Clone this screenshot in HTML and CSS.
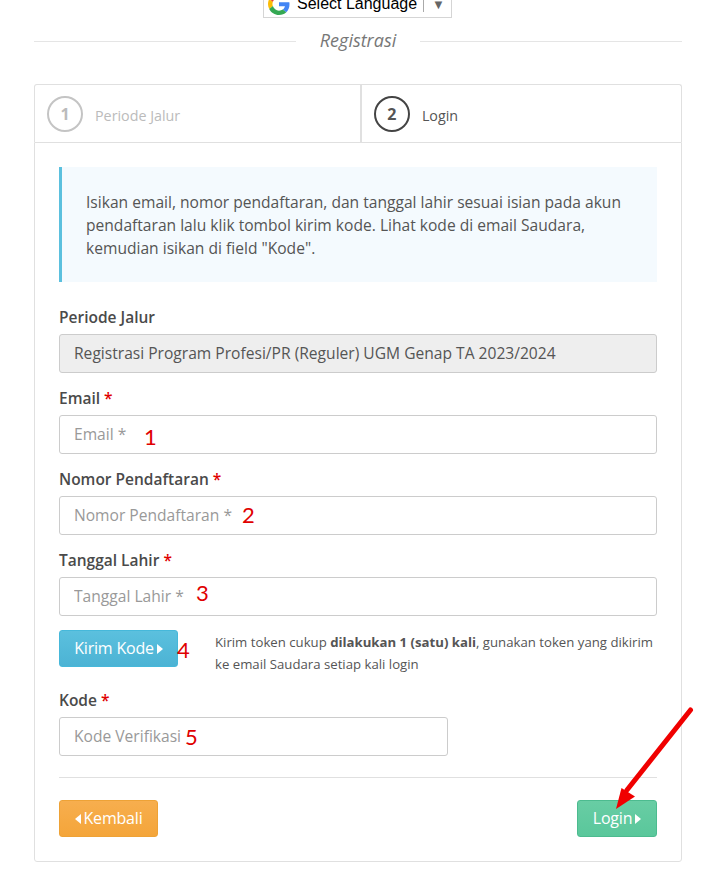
FILE: index.html
```html
<!DOCTYPE html>
<html lang="id">
<head>
    <meta charset="UTF-8">
    <meta name="viewport" content="width=device-width, initial-scale=1.0">
    <title>Registrasi</title>
    <link rel="stylesheet" href="styles.css">
</head>
<body>
    <div class="translate">
        <svg class="g-logo" width="22" height="22" viewBox="0 0 48 48">
            <path fill="#EA4335" d="M24 9.500c3.500 0 6.700 1.200 9.200 3.600l6.900-6.900C35.900 2.400 30.400 0 24 0 14.600 0 6.500 5.400 2.600 13.200l8 6.200C12.500 13.700 17.800 9.500 24 9.500z"/>
            <path fill="#4285F4" d="M46.900 24.500c0-1.600-.1-3.100-.4-4.500H24v9h12.900c-.6 3-2.200 5.500-4.800 7.200l7.700 6c4.500-4.200 7.100-10.300 7.100-17.700z"/>
            <path fill="#FBBC05" d="M10.500 28.600c-.5-1.400-.8-3-.8-4.600s.3-3.200.8-4.600l-8-6.200C.9 16.500 0 20.100 0 24s.9 7.500 2.600 10.800l7.900-6.200z"/>
            <path fill="#34A853" d="M24 48c6.500 0 11.900-2.100 15.900-5.800l-7.700-6c-2.200 1.400-4.900 2.300-8.200 2.300-6.200 0-11.500-4.200-13.400-9.900l-8 6.200C6.500 42.600 14.600 48 24 48z"/>
        </svg>
        <span class="translate-text">Select Language</span>
        <span class="translate-sep"></span>
        <span class="translate-caret">▼</span>
    </div>

    <div class="container">
        <div class="title-row">
            <span class="title-line"></span>
            <span class="title">Registrasi</span>
            <span class="title-line"></span>
        </div>

        <div class="steps">
            <div class="step">
                <span class="step-num">1</span>
                <span class="step-label">Periode Jalur</span>
            </div>
            <div class="step active">
                <span class="step-num">2</span>
                <span class="step-label">Login</span>
            </div>
        </div>

        <form class="panel">
            <div class="info">
                Isikan email, nomor pendaftaran, dan tanggal lahir sesuai isian pada akun
                pendaftaran lalu klik tombol kirim kode. Lihat kode di email Saudara,
                kemudian isikan di field "Kode".
            </div>

            <div class="form-group">
                <label class="form-label">Periode Jalur</label>
                <input class="form-control" type="text" value="Registrasi Program Profesi/PR (Reguler) UGM Genap TA 2023/2024" disabled>
            </div>

            <div class="form-group">
                <label class="form-label">Email <span class="req">*</span></label>
                <div class="field">
                    <input class="form-control" type="text" placeholder="Email *">
                    <span class="mark mark-1">1</span>
                </div>
            </div>

            <div class="form-group">
                <label class="form-label">Nomor Pendaftaran <span class="req">*</span></label>
                <div class="field">
                    <input class="form-control" type="text" placeholder="Nomor Pendaftaran *">
                    <span class="mark mark-2">2</span>
                </div>
            </div>

            <div class="form-group">
                <label class="form-label">Tanggal Lahir <span class="req">*</span></label>
                <div class="field">
                    <input class="form-control" type="text" placeholder="Tanggal Lahir *">
                    <span class="mark mark-3">3</span>
                </div>
            </div>

            <div class="send-row">
                <div class="field">
                    <button type="button" class="button button-info">Kirim Kode<span class="caret-right"></span></button>
                    <span class="mark mark-4">4</span>
                </div>
                <p class="send-note">Kirim token cukup <b>dilakukan 1 (satu) kali</b>, gunakan token yang dikirim ke email Saudara setiap kali login</p>
            </div>

            <div class="form-group code-group">
                <label class="form-label">Kode <span class="req">*</span></label>
                <div class="field">
                    <input class="form-control" type="text" placeholder="Kode Verifikasi">
                    <span class="mark mark-5">5</span>
                </div>
            </div>

            <div class="actions">
                <button type="button" class="button button-warning"><span class="caret-left"></span>Kembali</button>
                <button type="button" class="button button-success">Login<span class="caret-right"></span></button>
            </div>
        </form>
    </div>

    <svg class="arrow" width="90" height="120" viewBox="0 0 90 120">
        <line x1="78.500" y1="5" x2="15" y2="85" stroke="#f00000" stroke-width="5" stroke-linecap="round"/>
        <polygon points="4,104 9.500,83 23,91.500" fill="#f00000"/>
    </svg>
</body>
</html>
```

FILE: styles.css
```css
* {
    box-sizing: border-box;
    margin: 0;
    padding: 0;
}

body {
    position: relative;
    font-family: 'Open Sans', sans-serif;
    font-size: 14px;
    color: #555;
    background-color: #fff;
    min-height: 894px;
    overflow: hidden;
}

.translate {
    display: flex;
    align-items: center;
    width: 189px;
    height: 28px;
    margin: -10px 0 0 263px;
    padding-left: 4px;
    border: 1px solid #d5d5d5;
    font-family: 'Liberation Sans', sans-serif;
    font-size: 16px;
    color: #000;
}

.g-logo {
    margin-right: 7px;
}

.translate-sep {
    width: 1px;
    height: 15px;
    margin: 0 8px 0 6px;
    background-color: #aaa;
}

.translate-caret {
    font-size: 13px;
    color: #666;
}

.container {
    margin: 0 30px 0 34px;
}

.title-row {
    display: flex;
    align-items: center;
    height: 46px;
}

.title-line {
    flex: 1;
    height: 1px;
    background-color: #e5e5e5;
}

.title {
    padding: 0 24px 2px;
    font-size: 18px;
    font-style: italic;
    color: #777;
}

.steps {
    display: flex;
    height: 58px;
    margin-top: 20px;
    border: 1px solid #e0e0e0;
    border-bottom: none;
    border-radius: 3px 3px 0 0;
}

.step {
    display: flex;
    align-items: center;
    flex: 326;
    padding-left: 12px;
    color: #bbb;
}

.step.active {
    flex: 320;
    border-left: 2px solid #e0e0e0;
    color: #555;
}

.step-num {
    display: flex;
    justify-content: center;
    align-items: center;
    width: 36px;
    height: 36px;
    margin-right: 12px;
    border: 2px solid #c4c4c4;
    border-radius: 50%;
    font-size: 16px;
    font-weight: 700;
}

.step.active .step-num {
    border-color: #444;
}

.step-label {
    margin-top: 3px;
    font-size: 14.300px;
}

.panel {
    height: 720px;
    padding: 24px 24px 0;
    border: 1px solid #e0e0e0;
    border-radius: 0 0 3px 3px;
}

.info {
    height: 115px;
    margin-bottom: 24px;
    padding: 24px 24px 0;
    border-left: 3px solid #5bc0de;
    background-color: #f4fafe;
    font-size: 15.600px;
    line-height: 23px;
    color: #555;
}

.form-group {
    margin-bottom: 14px;
}

.form-label {
    display: block;
    height: 23px;
    margin-bottom: 5px;
    font-size: 15.500px;
    font-weight: 600;
    line-height: 23px;
    color: #4a4a4a;
}

.req {
    color: #e00000;
}

.form-control {
    display: block;
    width: 100%;
    height: 39px;
    padding: 0 14px 2px;
    border: 1px solid #ccc;
    border-radius: 3px;
    font-family: 'Open Sans', sans-serif;
    font-size: 15.600px;
    color: #555;
    background-color: #fff;
}

.form-control::placeholder {
    color: #999;
    opacity: 1;
}

.form-control:disabled {
    background-color: #eee;
    color: #555;
}

.field {
    position: relative;
}

.mark {
    position: absolute;
    font-family: 'Lato', sans-serif;
    font-size: 22px;
    line-height: 28px;
    color: #e00000;
}

.mark-1 { left: 85px; top: 8px; }
.mark-2 { left: 183px; top: 5px; }
.mark-3 { left: 137px; top: 2px; }
.mark-4 { left: 118px; top: 6px; }
.mark-5 { left: 126px; top: 6px; }

.send-row {
    display: flex;
    margin-bottom: 14px;
}

.send-note {
    width: 445px;
    margin: 1px 0 0 37px;
    font-size: 13.200px;
    line-height: 22px;
    color: #555;
}

.send-row .field {
    width: 119px;
    flex-shrink: 0;
}

.button {
    display: inline-flex;
    justify-content: center;
    align-items: center;
    height: 37px;
    padding-bottom: 2px;
    border: 1px solid;
    border-radius: 3px;
    font-family: 'Open Sans', sans-serif;
    font-size: 16px;
    letter-spacing: -0.2px;
    color: #fff;
    cursor: pointer;
}

.button-info {
    width: 119px;
    border-color: #46b8da;
    background: linear-gradient(#5bc0de, #4cb3d4);
}

.button-warning {
    width: 99px;
    border-color: #eea236;
    background: linear-gradient(#f7ae4e, #f4a53a);
}

.button-success {
    width: 80px;
    border-color: #4cbb8f;
    background: linear-gradient(#68cda4, #5ac79b);
}

.caret-right,
.caret-left {
    width: 0;
    height: 0;
    margin-top: 2px;
    border-top: 5px solid transparent;
    border-bottom: 5px solid transparent;
}

.caret-right {
    margin-left: 3px;
    border-left: 6px solid #fff;
}

.caret-left {
    margin-right: 3px;
    border-right: 6px solid #fff;
}

.code-group {
    margin-bottom: 0;
}

.code-group .field {
    width: 389px;
}

.actions {
    display: flex;
    justify-content: space-between;
    margin-top: 21px;
    padding-top: 22px;
    border-top: 1px solid #e0e0e0;
}

.arrow {
    position: absolute;
    left: 612px;
    top: 705px;
}
```
